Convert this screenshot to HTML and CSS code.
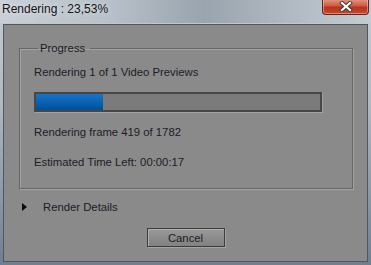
FILE: index.html
```html
<!DOCTYPE html>
<html lang="en">
<head>
    <meta charset="UTF-8">
    <title>Rendering : 23,53%</title>
    <link rel="stylesheet" href="styles.css">
</head>
<body>

<div class="window">
    <div class="titlebar">
        <div class="title">Rendering : 23,53%</div>
        <div class="close-btn">
            <svg width="14" height="11" viewBox="0 0 14 11">
                <path d="M3 2 L11 9 M11 2 L3 9" stroke="#3a3a3a" stroke-width="4" stroke-linecap="square"/>
                <path d="M3 2 L11 9 M11 2 L3 9" stroke="#ffffff" stroke-width="2.2" stroke-linecap="square"/>
            </svg>
        </div>
    </div>

    <div class="client">
        <fieldset class="group">
            <legend class="group-title">Progress</legend>
            <div class="line line-head">Rendering 1 of 1 Video Previews</div>
            <div class="progress">
                <div class="progress-fill" style="width: 23.53%"></div>
            </div>
            <div class="line line-frame">Rendering frame 419 of 1782</div>
            <div class="line">Estimated Time Left: 00:00:17</div>
        </fieldset>

        <div class="details">
            <span class="arrow"></span>
            <span>Render Details</span>
        </div>

        <div class="actions">
            <button class="btn">Cancel</button>
        </div>
    </div>
</div>

</body>
</html>
```

FILE: styles.css
```css
:root {
    --client-bg: #8a8a8a;
    --text: #1c1c28;
    --line-dark: #666666;
    --line-light: #a2a2a2;
    --track: #7b7b7b;
    --fill-top: #1a74c4;
    --fill-bottom: #004f98;
}

* {
    box-sizing: border-box;
    margin: 0;
    padding: 0;
}

body {
    font-family: "Liberation Sans", Arial, sans-serif;
    background: linear-gradient(180deg, #c6ccd2 0%, #b0b8c0 40%, #6f7f90 100%);
    width: 371px;
    height: 265px;
    overflow: hidden;
}

.window {
    height: 265px;
    display: flex;
    flex-direction: column;
}

.titlebar {
    height: 23px;
    display: flex;
    justify-content: space-between;
    align-items: flex-start;
    padding-left: 2px;
    padding-right: 2px;
    background: linear-gradient(90deg, #c9cfd6 0%, #b7c0c8 30%, #9aa4ae 55%, #b2bbc4 80%, #c4cbd2 100%);
}

.title {
    font-size: 12px;
    color: #14141a;
    line-height: 18px;
    text-shadow: 0 0 6px rgba(255, 255, 255, 0.7);
}

.close-btn {
    width: 47px;
    height: 16px;
    margin-top: -1px;
    border: 1px solid #5a2a22;
    border-top: none;
    border-radius: 0 0 4px 4px;
    background: linear-gradient(180deg, #e09a88 0%, #d05a42 45%, #b8321c 55%, #c8482e 100%);
    box-shadow: inset 0 0 0 1px rgba(255, 200, 180, 0.5);
    display: flex;
    align-items: center;
    justify-content: center;
}

.client {
    margin: 1px 3px 0 3px;
    height: 238px;
    background-color: var(--client-bg);
    border: 1px solid #50585f;
    padding: 17px 15px 0 15px;
    display: flex;
    flex-direction: column;
}

.group {
    width: 334px;
    height: 147px;
    border: 1px solid var(--line-dark);
    box-shadow: inset 1px 1px 0 var(--line-light), 1px 1px 0 var(--line-light);
    padding: 11px 0 0 14px;
}

.group-title {
    font-size: 11.3px;
    color: var(--text);
    padding: 0 5px 0 2px;
    margin-left: 4px;
}

.line {
    font-size: 11.3px;
    color: var(--text);
    line-height: 14px;
}

.line-head {
    margin-bottom: 13px;
}

.line-frame {
    margin-bottom: 16px;
}

.progress {
    width: 288px;
    height: 20px;
    background-color: var(--track);
    border: 2px solid #474747;
    box-shadow: 1px 1px 0 var(--line-light);
    margin-bottom: 13px;
}

.progress-fill {
    height: 100%;
    background: linear-gradient(180deg, var(--fill-top) 0%, #0a62b2 50%, var(--fill-bottom) 100%);
}

.details {
    display: flex;
    align-items: center;
    font-size: 11.3px;
    color: var(--text);
    margin-top: 12px;
    margin-left: 3px;
}

.arrow {
    width: 0;
    height: 0;
    border-top: 4px solid transparent;
    border-bottom: 4px solid transparent;
    border-left: 5px solid #0a0a0a;
    margin-right: 16px;
}

.actions {
    display: flex;
    justify-content: center;
    margin-top: 15px;
}

.btn {
    width: 78px;
    height: 19px;
    font-family: inherit;
    font-size: 11.3px;
    color: var(--text);
    background: linear-gradient(180deg, #9a9a9a 0%, #8c8c8c 50%, #828282 100%);
    border: 1px solid #3c3c3c;
    box-shadow: inset 1px 1px 0 #b0b0b0, 1px 1px 0 #a4a4a4;
    cursor: pointer;
}
```
